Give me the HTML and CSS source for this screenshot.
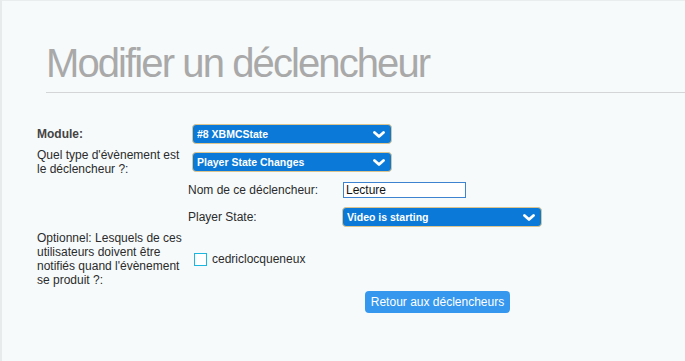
FILE: index.html
```html
<!DOCTYPE html>
<html lang="fr">
<head>
    <meta charset="UTF-8">
    <meta name="viewport" content="width=device-width, initial-scale=1.0">
    <title>Modifier un déclencheur</title>
    <link rel="stylesheet" href="styles.css">
</head>
<body>
    <div class="panel">
        <h1 class="title">Modifier un déclencheur</h1>

        <!-- Trigger form -->
        <form class="trigger-form">
            <label class="field-label strong">Module:</label>
            <div class="dropdown">
                <span>#8 XBMCState</span>
                <svg class="chevron" width="12" height="7" viewBox="0 0 12 7"><polyline points="1.5,1.5 6,5.5 10.5,1.5"/></svg>
            </div>

            <label class="field-label">Quel type d'évènement est le déclencheur ?:</label>
            <div class="dropdown">
                <span>Player State Changes</span>
                <svg class="chevron" width="12" height="7" viewBox="0 0 12 7"><polyline points="1.5,1.5 6,5.5 10.5,1.5"/></svg>
            </div>

            <div></div>
            <div class="sub-fields">
                <label class="field-label">Nom de ce déclencheur:</label>
                <div><input class="text-input" type="text" value="Lecture"></div>

                <label class="field-label">Player State:</label>
                <div class="dropdown">
                    <span>Video is starting</span>
                    <svg class="chevron" width="12" height="7" viewBox="0 0 12 7"><polyline points="1.5,1.5 6,5.5 10.5,1.5"/></svg>
                </div>
            </div>

            <label class="field-label">Optionnel: Lesquels de ces utilisateurs doivent être notifiés quand l'évènement se produit ?:</label>
            <div class="user-list">
                <span class="checkbox"></span>
                <span>cedriclocqueneux</span>
            </div>

            <div></div>
            <div class="actions">
                <button type="button" class="back-button">Retour aux déclencheurs</button>
            </div>
        </form>
    </div>
</body>
</html>
```

FILE: styles.css
```css
* {
    margin: 0;
    padding: 0;
    box-sizing: border-box;
}

html, body {
    height: 100%;
    overflow: hidden;
    background-color: #f6fafb;
    font-family: "Liberation Sans", Arial, sans-serif;
}

.panel {
    min-height: 100%;
    background-color: #f6fafb;
    border-left: 2px solid #e7ebec;
    border-top: 1px solid #eaeded;
}

.title {
    margin: 42px 0 0 44px;
    padding-bottom: 9px;
    border-bottom: 1px solid #d3d5d6;
    font-size: 40px;
    line-height: 40px;
    font-weight: normal;
    letter-spacing: -1.9px;
    color: #a9a9a9;
}

.trigger-form {
    display: grid;
    grid-template-columns: 155px 1fr;
    row-gap: 4px;
    margin-top: 31px;
    padding: 0 0 0 35px;
    font-size: 12px;
    line-height: 14px;
    color: #2b2b2b;
}

.field-label {
    align-self: center;
    padding-right: 4px;
}

.field-label.strong {
    font-weight: bold;
    color: #444;
}

.dropdown {
    align-self: center;
    display: flex;
    align-items: center;
    justify-content: space-between;
    width: 200px;
    height: 20px;
    padding: 0 6px 0 4px;
    border: 1px solid #dcc58f;
    border-radius: 4px;
    background-color: #0b79d7;
    color: #fff;
    font-size: 10.5px;
    font-weight: bold;
}

.chevron polyline {
    fill: none;
    stroke: #fff;
    stroke-width: 2.8;
    stroke-linecap: round;
    stroke-linejoin: round;
}

.sub-fields {
    display: grid;
    grid-template-columns: 154px 1fr;
    grid-auto-rows: 20px;
    row-gap: 7px;
    margin-left: -4px;
}

.text-input {
    display: block;
    width: 123px;
    height: 16px;
    margin-top: 2px;
    margin-left: 1px;
    padding: 0 2px;
    border: 1px solid #3d83d0;
    background: #fff;
    font-family: "Liberation Sans", Arial, sans-serif;
    font-size: 12px;
    color: #111;
    outline: none;
}

.user-list {
    align-self: center;
    display: flex;
    align-items: center;
    gap: 5px;
    padding-left: 2px;
}

.checkbox {
    width: 13px;
    height: 13px;
    border: 1px solid #1bb7de;
    background-color: #fff;
}

.actions {
    display: flex;
    justify-content: center;
    padding-right: 2px;
}

.back-button {
    width: 145px;
    height: 22px;
    border: none;
    border-radius: 4px;
    background-color: #3597ee;
    color: #fff;
    font-family: "Liberation Sans", Arial, sans-serif;
    font-size: 12px;
}
```
